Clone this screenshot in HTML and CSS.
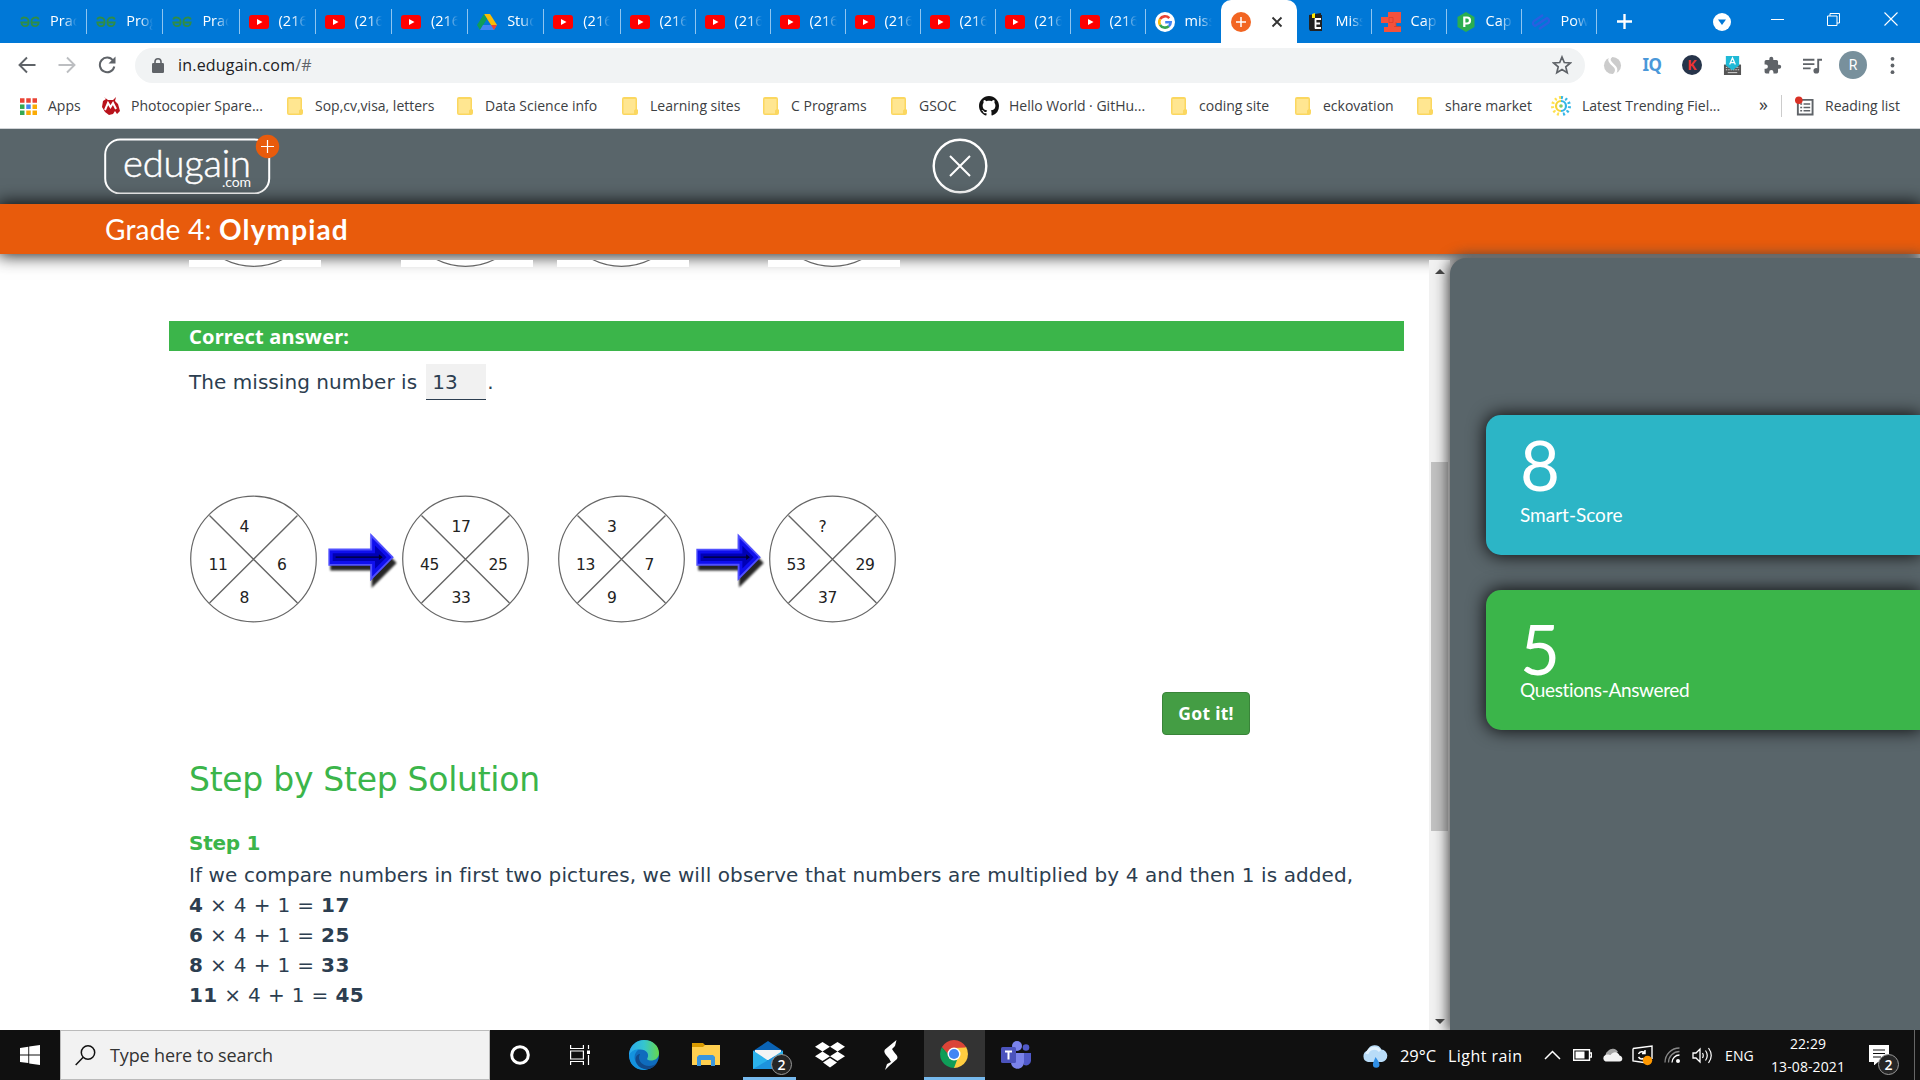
FILE: index.html
```html
<!DOCTYPE html>
<html lang="en">
<head>
<meta charset="utf-8">
<title>Edugain</title>
<link rel="stylesheet" href="styles.css">
</head>
<body>
<svg class="defs" width="0" height="0">
  <defs>
    <symbol id="gfg" viewBox="0 0 20 12"><g fill="none" stroke="#2f8d46" stroke-width="1.8"><path d="M1.3 3.5C2 .6 8.600 .6 8.600 6S2 11.600 1.300 6.500H9"/><path d="M18.700 3.500C18 .6 11.400 .6 11.400 6s6.600 5.600 7.300 .5H11"/></g></symbol>
    <symbol id="yt" viewBox="0 0 20 14"><rect width="20" height="14" rx="3" fill="#f00"/><path d="M8 4l5.500 3L8 10z" fill="#fff"/></symbol>
    <symbol id="folder" viewBox="0 0 16 18"><path d="M2 0h11a2 2 0 0 1 2 2v10l1 1v3a2 2 0 0 1-2 2H2a2 2 0 0 1-2-2V2a2 2 0 0 1 2-2z" fill="#fbd75f"/><path d="M1.500 2h12v10l-1.500 1.500V16.500H1.500z" fill="#ffe691"/></symbol>
    <symbol id="arrow" viewBox="0 0 79 60">
      <path d="M4 19H47V3L73 30 47 56V38H4z" fill="#000" opacity=".85" filter="url(#soft)" transform="translate(1.500 2)"/>
      <path d="M3.500 17H47V1L71.500 26 47 51V35H3.500z" fill="#5050ff"/>
      <path d="M5 19H49V6L69 26 49 46V33H5z" fill="#0f0fee"/>
      <path d="M8 22H52V14L64 26 52 38V30H8z" fill="#0000b4"/>
      <path d="M11 25.300H56V23L60 26 56 29V26.700H11z" fill="#000030"/>
    </symbol>
    <symbol id="disc" viewBox="0 0 132 132">
      <rect width="132" height="132" fill="#fff"/>
      <g fill="none" stroke="#666" stroke-width="1.200"><circle cx="64.500" cy="64" r="62.800"/><path d="M20.500 20.500l88 87.500M108.500 20.500l-88 87.500" stroke-width="1.400"/></g>
    </symbol>
    <filter id="soft" x="-20%" y="-20%" width="140%" height="140%"><feGaussianBlur stdDeviation="1.300"/></filter>
  </defs>
</svg>

<div class="screen">
  <div class="tabs">
    <div class="tab wide"><svg class="fav gfg"><use href="#gfg"/></svg><span>Prac</span></div>
    <div class="tab wide"><svg class="fav gfg"><use href="#gfg"/></svg><span>Prog</span></div>
    <div class="tab wide"><svg class="fav gfg"><use href="#gfg"/></svg><span>Prac</span></div>
    <div class="tab wide"><svg class="fav yt"><use href="#yt"/></svg><span>(216</span></div>
    <div class="tab wide"><svg class="fav yt"><use href="#yt"/></svg><span>(216</span></div>
    <div class="tab wide"><svg class="fav yt"><use href="#yt"/></svg><span>(216</span></div>
    <div class="tab wide"><svg class="fav" viewBox="0 0 20 18"><path d="M7 1h6l7 11h-6z" fill="#fbbc05"/><path d="M7 1l3 5-7 11-3-5z" fill="#0f9d58"/><path d="M6 12h14l-3 5H3z" fill="#4285f4"/><path d="M14 12h6l-3 5z" fill="#ea4335"/></svg><span>Stud</span></div>
    <div class="tab wide"><svg class="fav yt"><use href="#yt"/></svg><span>(216</span></div>
    <div class="tab"><svg class="fav yt"><use href="#yt"/></svg><span>(216</span></div>
    <div class="tab"><svg class="fav yt"><use href="#yt"/></svg><span>(216</span></div>
    <div class="tab"><svg class="fav yt"><use href="#yt"/></svg><span>(216</span></div>
    <div class="tab"><svg class="fav yt"><use href="#yt"/></svg><span>(216</span></div>
    <div class="tab"><svg class="fav yt"><use href="#yt"/></svg><span>(216</span></div>
    <div class="tab"><svg class="fav yt"><use href="#yt"/></svg><span>(216</span></div>
    <div class="tab"><svg class="fav yt"><use href="#yt"/></svg><span>(216</span></div>
    <div class="tab last"><svg class="fav" viewBox="0 0 20 20"><circle cx="10" cy="10" r="10" fill="#fff"/><g fill="none" stroke-width="2.600"><path d="M14.300 6.200A5.800 5.800 0 0 0 5 7.200" stroke="#ea4335"/><path d="M5 7.200a5.800 5.800 0 0 0 0 5.600" stroke="#fbbc05"/><path d="M5 12.800a5.800 5.800 0 0 0 8.800 1.400" stroke="#34a853"/><path d="M13.800 14.200A5.800 5.800 0 0 0 15.700 10.200H10.200" stroke="#4285f4"/></g></svg><span>miss</span></div>
    <div class="tab active"><svg class="fav" viewBox="0 0 20 20"><circle cx="10" cy="10" r="10" fill="#f26522"/><path d="M10 5v10M5 10h10" stroke="#fff" stroke-width="1.500"/></svg><svg class="shut" viewBox="0 0 12 12"><path d="M1.500 1.500l9 9M10.500 1.500l-9 9" stroke="#333" stroke-width="1.800"/></svg></div>
    <div class="tab"><svg class="fav" viewBox="0 0 20 20"><path d="M3 3l12-2v2h1v16H4L3 17z" fill="#222"/><path d="M6 2l3-1v5H6z" fill="#ffe600"/><path d="M9 7h6M9 11.500h5M9 16h6M9.500 6.500v10" stroke="#fff" stroke-width="1.800"/></svg><span>Miss</span></div>
    <div class="tab"><svg class="fav" viewBox="0 0 20 20"><path d="M7 0H20V11H15V15H20V20H3V15H7V11H0V5H7z" fill="#f4513b"/><path d="M8 5.500h4v5H8zM13 14.500h7M15 10v5" fill="none" stroke="#d8402c" stroke-width=".8"/></svg><span>Cap</span></div>
    <div class="tab"><svg class="fav" viewBox="0 0 20 20"><path d="M10 0l8.500 5v10L10 20l-8.500-5V5z" fill="#2bae4f"/><path d="M8.300 15V5.500H11a2.700 2.700 0 0 1 0 6H8.300" stroke="#fff" stroke-width="2.200" fill="none"/></svg><span>Cap</span></div>
    <div class="tab"><svg class="fav" viewBox="0 0 20 20"><g fill="none" stroke="#2a5fe0" stroke-width="2.200"><path d="M12 3L3 9c-2 2-1 4 1 5l9-6"/><path d="M8 17l9-6c2-2 1-4-1-5l-9 6"/></g></svg><span>Pow</span></div>
    <svg class="plus" viewBox="0 0 14 14"><path d="M7 0v14M0 7h14" stroke="#fff" stroke-width="2.200"/></svg>
    <div class="window-controls">
      <svg width="18" height="18" viewBox="0 0 18 18"><circle cx="9" cy="9" r="9" fill="#fff"/><path d="M5 6.500h8L9 12z" fill="#0078d7"/></svg>
      <svg width="13" height="13" viewBox="0 0 13 13"><path d="M0 6.500h13" stroke="#fff"/></svg>
      <svg width="13" height="13" viewBox="0 0 13 13"><path d="M.5 3h9.500v9.500H.5zM3 3V.5h9.500V10H10" stroke="#fff" fill="none"/></svg>
      <svg width="14" height="14" viewBox="0 0 14 14"><path d="M.5 .5l13 13M13.500 .5l-13 13" stroke="#fff" stroke-width="1.100"/></svg>
    </div>
  </div>

  <div class="toolbar">
    <svg class="back" viewBox="0 0 18 18"><path d="M17.500 9H1.500M9 1.500L1.500 9 9 16.500" fill="none" stroke="#5f6368" stroke-width="1.900"/></svg>
    <svg class="forward" viewBox="0 0 18 18"><path d="M.5 9h16M9 1.500L16.500 9 9 16.500" fill="none" stroke="#bcbec1" stroke-width="1.900"/></svg>
    <svg class="reload" viewBox="0 0 18 18"><path d="M15 4.500A7.300 7.300 0 1 0 16.300 10.500" fill="none" stroke="#5f6368" stroke-width="2"/><path d="M17.500 .5v7h-7z" fill="#5f6368"/></svg>
    <div class="omnibox">
      <svg class="lock" viewBox="0 0 12 15"><rect y="5" width="12" height="10" rx="1.200" fill="#5f6368"/><path d="M3 6V3.800a3 3 0 0 1 6 0V6" fill="none" stroke="#5f6368" stroke-width="1.600"/></svg>
      <span class="url">in.edugain.com<i>/#</i></span>
      <svg class="star" viewBox="0 0 20 20"><path d="M10 2l2.300 5.500 6 .5-4.500 3.900 1.400 5.800L10 14.600l-5.200 3.100 1.400-5.800L1.700 8l6-.5z" fill="none" stroke="#5f6368" stroke-width="1.700"/></svg>
    </div>
    <div class="extensions">
      <svg viewBox="0 0 20 20"><circle cx="10" cy="10" r="9" fill="#ccc"/><path d="M9 0C3 5 11 9 13 12s0 7-2 8" fill="none" stroke="#fff" stroke-width="2.500"/></svg>
      <b class="iq">IQ</b>
      <span class="kbadge">K</span>
      <svg viewBox="0 0 20 20"><path d="M1 9h18v11H1z" fill="#555"/><path d="M3 12h3M14 12h3M3 14.500h14" stroke="#ddd" stroke-dasharray="1.500 1"/><path d="M5 17.500h10" stroke="#ddd"/><path d="M3 0h14v10l-7 5-7-5z" fill="#1fb9d6"/><path d="M7 9l3-7 3 7M8 7h4" stroke="#fff" fill="none" stroke-width="1.300"/></svg>
      <svg viewBox="0 0 24 24"><path d="M20.500 11H19V7a2 2 0 0 0-2-2h-4V3.500a2.500 2.500 0 0 0-5 0V5H4a2 2 0 0 0-2 2v3.800h1.500a2.700 2.700 0 0 1 0 5.400H2V20a2 2 0 0 0 2 2h3.800v-1.500a2.700 2.700 0 0 1 5.400 0V22H17a2 2 0 0 0 2-2v-4h1.500a2.500 2.500 0 0 0 0-5z" fill="#5f6368"/></svg>
      <svg viewBox="0 0 20 20"><path d="M0 4h12M0 8.500h12M0 13h8" stroke="#5f6368" stroke-width="2"/><path d="M20 4h-4v11" stroke="#5f6368" stroke-width="2" fill="none"/><circle cx="14" cy="15.500" r="3" fill="#5f6368"/></svg>
      <span class="avatar">R</span>
      <svg viewBox="0 0 20 20"><g fill="#5f6368"><circle cx="10" cy="3" r="2"/><circle cx="10" cy="10" r="2"/><circle cx="10" cy="17" r="2"/></g></svg>
    </div>
  </div>

  <div class="bookmarks">
    <div><svg class="apps" viewBox="0 0 17 17"><path d="M0 2.500h17" stroke="#ea4335" stroke-width="4.500" stroke-dasharray="4.500 1.750"/><path d="M0 8.700h4.500" stroke="#34a853" stroke-width="4.500"/><path d="M6.250 8.700h4.500" stroke="#4285f4" stroke-width="4.500"/><path d="M12.500 8.700H17M12.500 14.800H17M6.250 14.800h4.500" stroke="#fbab05" stroke-width="4.500"/><path d="M0 14.800h4.500" stroke="#34a853" stroke-width="4.500"/></svg><span>Apps</span></div>
    <div><svg class="big" viewBox="0 0 20 20"><path d="M4 1l4 3h5l3-3-1 4 3 3 2 7-3 3-2-3-2 3-4 1-4-3-3-5 1-6 3-2z" fill="#b9121b"/><path d="M5 14L8 7l2.500 4L13 7l3 6" fill="none" stroke="#fff" stroke-width="2"/></svg><span>Photocopier Spare...</span></div>
    <div><svg><use href="#folder"/></svg><span>Sop,cv,visa, letters</span></div>
    <div><svg><use href="#folder"/></svg><span>Data Science info</span></div>
    <div><svg><use href="#folder"/></svg><span>Learning sites</span></div>
    <div><svg><use href="#folder"/></svg><span>C Programs</span></div>
    <div><svg><use href="#folder"/></svg><span>GSOC</span></div>
    <div><svg class="big" viewBox="0 0 16 16"><path fill="#111" d="M8 0C3.580 0 0 3.580 0 8c0 3.540 2.290 6.530 5.470 7.590.4.070.55-.17.55-.38 0-.19-.01-.82-.01-1.490-2.010.37-2.530-.49-2.690-.94-.09-.23-.48-.94-.82-1.130-.28-.15-.68-.52-.01-.53.63-.01 1.080.58 1.230.82.72 1.210 1.870.87 2.330.66.070-.52.28-.87.51-1.070-1.780-.2-3.640-.89-3.640-3.950 0-.87.31-1.590.82-2.150-.08-.2-.36-1.020.08-2.120 0 0 .67-.21 2.200.82.64-.18 1.320-.27 2-.27s1.360.09 2 .27c1.530-1.040 2.200-.82 2.200-.82.44 1.100.16 1.920.08 2.120.51.56.82 1.270.82 2.150 0 3.070-1.870 3.750-3.650 3.950.29.25.54.73.54 1.480 0 1.070-.01 1.930-.01 2.200 0 .21.15.46.55.38A8.010 8.010 0 0 0 16 8c0-4.420-3.580-8-8-8z"/></svg><span>Hello World · GitHu...</span></div>
    <div><svg><use href="#folder"/></svg><span>coding site</span></div>
    <div><svg><use href="#folder"/></svg><span>eckovation</span></div>
    <div><svg><use href="#folder"/></svg><span>share market</span></div>
    <div><svg class="big" viewBox="0 0 20 20"><path d="M10 1.500a8.500 8.500 0 0 0 0 17" fill="none" stroke="#ffe14d" stroke-width="3" stroke-dasharray="2 2.500"/><path d="M10 1.500a8.500 8.500 0 0 1 0 17" fill="none" stroke="#35b6e6" stroke-width="3" stroke-dasharray="2 2.500"/><path d="M10 5a5 5 0 0 0 0 10" fill="none" stroke="#f7d538" stroke-width="2.200"/><path d="M10 5a5 5 0 0 1 0 10" fill="none" stroke="#35b6e6" stroke-width="2.200"/><circle cx="10" cy="10" r="1.800" fill="#7fc96b"/></svg><span>Latest Trending Fiel...</span></div>
    <div class="more">»</div>
    <div class="reading"><svg viewBox="0 0 20 20"><path d="M3 3.500h15.500V19H3z" fill="none" stroke="#5f6368" stroke-width="2"/><path d="M5.500 8h2M9 8h7M5.500 11.500h2M9 11.500h7M5.500 15h2M9 15h7" stroke="#5f6368" stroke-width="1.600"/><circle cx="4" cy="4" r="4" fill="#d93025" /></svg><span>Reading list</span></div>
  </div>

  <header class="site-header">
    <svg class="logo" viewBox="0 0 176 60">
      <rect x="1.200" y="5.500" width="164" height="54" rx="15" fill="none" stroke="#fff" stroke-width="2"/>
      <text class="logo-name" x="19" y="42.500" textLength="128">edugain</text>
      <text class="logo-com" x="118" y="52.500" textLength="29">.com</text>
      <circle cx="163.500" cy="12.500" r="11.700" fill="#e85b0c"/>
      <path d="M163.500 6v13M157 12.500h13" stroke="#fff" stroke-width="1.200"/>
    </svg>
    <svg class="close" viewBox="0 0 56 56"><circle cx="28" cy="28" r="26.300" fill="none" stroke="#fff" stroke-width="2.400"/><path d="M18 18l20 20M38 18L18 38" stroke="#fff" stroke-width="2"/></svg>
  </header>
  <div class="grade"><span>Grade 4:</span><b>Olympiad</b></div>

  <div class="page">
    <main class="content">
      <div class="discs cut">
        <svg class="disc" viewBox="0 120.500 132 7"><use href="#disc" width="132" height="132"/></svg>
        <span class="space"></span>
        <svg class="disc" viewBox="0 120.500 132 7"><use href="#disc" width="132" height="132"/></svg>
        <svg class="disc third" viewBox="0 120.500 132 7"><use href="#disc" width="132" height="132"/></svg>
        <span class="space"></span>
        <svg class="disc" viewBox="0 120.500 132 7"><use href="#disc" width="132" height="132"/></svg>
      </div>
      <h3 class="answer-bar">Correct answer:</h3>
      <p class="answer"><span>The missing number is</span><span class="blank">13</span>.</p>
      <div class="discs">
        <svg class="disc" viewBox="0 0 132 132"><use href="#disc"/><text x="50.500" y="37">4</text><text x="19.500" y="74.500">11</text><text x="88" y="74.500">6</text><text x="50.500" y="108">8</text></svg>
        <svg class="arrow"><use href="#arrow"/></svg>
        <svg class="disc" viewBox="0 0 132 132"><use href="#disc"/><text x="50.500" y="37">17</text><text x="19" y="74.500">45</text><text x="87.500" y="74.500">25</text><text x="50.500" y="108">33</text></svg>
        <svg class="disc third" viewBox="0 0 132 132"><use href="#disc"/><text x="50" y="37">3</text><text x="19" y="74.500">13</text><text x="87.500" y="74.500">7</text><text x="50" y="108">9</text></svg>
        <svg class="arrow"><use href="#arrow"/></svg>
        <svg class="disc" viewBox="0 0 132 132"><use href="#disc"/><text x="50.500" y="37">?</text><text x="18.500" y="74.500">53</text><text x="87.500" y="74.500">29</text><text x="50" y="108">37</text></svg>
      </div>
      <button class="got">Got it!</button>
      <h2>Step by Step Solution</h2>
      <h4>Step 1</h4>
      <p class="step intro">If we compare numbers in first two pictures, we will observe that numbers are multiplied by 4 and then 1 is added,</p>
      <p class="step"><b>4</b> × 4 + 1 = <b>17</b></p>
      <p class="step"><b>6</b> × 4 + 1 = <b>25</b></p>
      <p class="step"><b>8</b> × 4 + 1 = <b>33</b></p>
      <p class="step"><b>11</b> × 4 + 1 = <b>45</b></p>
    </main>
    <div class="scrollbar"><i class="up"></i><i class="thumb"></i><i class="down"></i></div>
    <aside class="scores">
      <div class="card teal"><strong>8</strong><span>Smart-Score</span></div>
      <div class="card green"><strong>5</strong><span>Questions-Answered</span></div>
    </aside>
  </div>

  <footer class="taskbar">
    <div class="start"><svg width="20" height="20" viewBox="0 0 20 20"><path d="M0 3l8.300-1.200v7.700H0zM9.200 1.600L20 0v9.500H9.200zM0 10.400h8.300v7.700L0 17zM9.200 10.400H20V20l-10.800-1.600z" fill="#fff"/></svg></div>
    <div class="search"><svg width="21" height="21" viewBox="0 0 21 21"><circle cx="13" cy="7.500" r="6.700" fill="none" stroke="#111" stroke-width="1.500"/><path d="M8.200 12.300L.7 20" stroke="#111" stroke-width="1.500"/></svg><span>Type here to search</span></div>
    <div class="pins">
      <div><svg width="20" height="20" viewBox="0 0 20 20"><circle cx="10" cy="10" r="8.300" fill="none" stroke="#fff" stroke-width="3"/></svg></div>
      <div><svg width="20" height="20" viewBox="0 0 20 20"><path d="M.6 0v3.500h12.800V0M.6 20v-3.500h12.800V20M.6 6h12.800v8H.6zM18.500 0v4M18.500 10v10" fill="none" stroke="#fff" stroke-width="1.200"/><path d="M17 5.500h3v3.500h-3z" fill="#fff"/></svg></div>
      <div><svg width="30" height="30" viewBox="0 0 30 30"><defs><linearGradient id="ea" x1="0" x2="1"><stop offset="0" stop-color="#2aa9ee"/><stop offset=".5" stop-color="#35c5cf"/><stop offset="1" stop-color="#66d84b"/></linearGradient></defs><circle cx="15" cy="15" r="15" fill="#0f6cbd"/><path d="M0 14C1 5 8 0 15 0c9 0 15 6 15 13 0 5-4 7.500-8 7.500-3 0-4.500-1-3.500-2.500 2-4-1-8.500-7-8.500C6 9.500 2 12 0 17z" fill="url(#ea)"/><path d="M0 15c2-4 6-6 10-5.500-4 2-6 8-3 13 2.500 4 7 6.500 12 7C8 32 0 25 0 15z" fill="#1493df"/><path d="M11 14c-3 5 1 12 9 12 3 0 6-1 8-3-5 8-16 8-20 1-3-5-.5-10 3-10z" fill="#114a8b"/></svg></div>
      <div><svg width="28" height="24" viewBox="0 0 28 24"><path d="M0 0h11l2 2v4H0z" fill="#d99a00"/><path d="M0 4h11l2-2h15v20H0z" fill="#ffcf4f"/><path d="M5 23V14l2-2h14l2 2v9h-4v-6h-10v6z" fill="#3a96dd"/></svg></div>
      <div class="open"><svg width="30" height="28" viewBox="0 0 30 28"><path d="M0 10L15 0l15 10v6H0z" fill="#0a63b5"/><path d="M2 9h26v10H2z" fill="#f4f4f4"/><path d="M0 9.500l15 10 15-10V28H0z" fill="#2bb2ec"/><path d="M0 28l22-13 8 5v8z" fill="#1d93dd"/></svg><em class="badge">2</em></div>
      <div><svg width="30" height="26" viewBox="0 0 30 26"><path d="M7.500 0l7.500 4.800-7.500 4.700L0 4.800zM22.500 0L30 4.800l-7.500 4.700L15 4.800zM7.500 9.500l7.500 4.800L7.500 19 0 14.300zM22.500 9.500l7.500 4.800-7.500 4.700-7.500-4.700zM15 16l7 4.600-7 4.800-7-4.800z" fill="#fff"/></svg></div>
      <div><svg width="14" height="30" viewBox="0 0 14 30"><path d="M12.500 0L1 9.500c-2 3 1 5 4 9L7 22l6-3c1.500-3-1-4-3-7L8 9l3-3zM13 19L3 24 1 30l4-4z" fill="#fff"/></svg></div>
      <div class="current"><svg width="28" height="28" viewBox="0 0 28 28"><path d="M14 14L1.900 7A14 14 0 0 1 26.100 7z" fill="#db4437"/><path d="M14 14l12.100-7A14 14 0 0 1 14 28z" fill="#ffcd40"/><path d="M14 28A14 14 0 0 1 1.900 7L9 18l8 2z" fill="#0f9d58"/><path d="M14 7.500h12.300L20 15z" fill="#ffcd40"/><path d="M2 7l6 10 4-9.500z" fill="#0f9d58"/><path d="M2 7h24.200L14 8 8 14z" fill="#db4437"/><circle cx="14" cy="14" r="6.500" fill="#fff"/><circle cx="14" cy="14" r="5.100" fill="#4285f4"/></svg></div>
      <div><svg width="30" height="28" viewBox="0 0 30 28"><circle cx="16" cy="5" r="5" fill="#7b83eb"/><circle cx="25" cy="6.500" r="3.300" fill="#5059c9"/><path d="M20 12h10v8a5 5 0 0 1-7 4z" fill="#5059c9"/><path d="M10 12h13v9c0 9-13 9-13 0z" fill="#7b83eb"/><rect y="6" width="15" height="16" rx="1.500" fill="#4b53bc"/><path d="M4 10.500h7M7.500 10.500v8" stroke="#fff" stroke-width="2"/></svg></div>
    </div>
    <div class="weather"><svg width="26" height="24" viewBox="0 0 26 24"><path d="M6 18a6 6 0 0 1-.5-11.500A7.500 7.500 0 0 1 19.500 5.500 6.300 6.300 0 0 1 20 18z" fill="#b8dcf8"/><path d="M5 10a7.500 7.500 0 0 1 13-3" fill="none" stroke="#e2f2ff" stroke-width="3"/><path d="M13.500 13c3 4 4 6 4 7.500a3.300 3.300 0 0 1-6.600 0c0-1.500 1-3.500 2.600-7.500z" fill="#2f8fe6"/></svg><span class="temp">29°C</span><span class="rain">Light rain</span></div>
    <div class="tray">
      <svg width="17" height="10" viewBox="0 0 17 10"><path d="M1 9l7.500-7.500L16 9" fill="none" stroke="#fff" stroke-width="1.500"/></svg>
      <svg width="19" height="12" viewBox="0 0 19 12"><path d="M.7 .7h15.800v10.600H.7zM17 4h1.500v4H17" fill="none" stroke="#fff" stroke-width="1.400"/><path d="M2.500 2.500h9v7h-9z" fill="#fff"/></svg>
      <svg width="21" height="14" viewBox="0 0 21 14"><path d="M4 9a5 5 0 0 1 2-6 6 6 0 0 1 10 1l-9 6z" fill="#a5a5a5"/><path d="M3.500 13.500a3.500 3.500 0 0 1 0-6.500c2-1 4 0 5 0 3-4.500 8-3 9 .5 4 1 3.500 6 0 6z" fill="#f2f2f2"/></svg>
      <svg width="21" height="21" viewBox="0 0 21 21"><path d="M1 3.500L20 1v13M12 17.500L1 16V3.500" fill="none" stroke="#fff" stroke-width="1.400"/><path d="M13 8a4 4 0 0 0-6.500 1M6.500 12a4 4 0 0 0 5 1.500M13 5v3.500h-3" fill="none" stroke="#fff" stroke-width="1.500"/><circle cx="15.500" cy="15.500" r="4.700" fill="#ff9800"/></svg>
      <svg width="17" height="16" viewBox="0 0 17 16"><g fill="none" stroke="#888" stroke-width="1.300"><path d="M1 15.500A14.500 14.500 0 0 1 15.500 1M4.500 15.500a11 11 0 0 1 11-11"/><path d="M8 15.500A7.500 7.500 0 0 1 15.500 8" stroke="#fff"/></g><circle cx="14" cy="14" r="2" fill="#fff"/></svg>
      <svg width="21" height="17" viewBox="0 0 21 17"><path d="M1 6h3l4-4v13l-4-4H1z" fill="none" stroke="#fff" stroke-width="1.300"/><path d="M10.500 6q1.500 2.500 0 5M13.500 3.500q3.500 5 0 10M16.500 1q5.500 7.500 0 15" fill="none" stroke="#fff" stroke-width="1.200"/></svg>
      <span class="lang">ENG</span>
    </div>
    <div class="clock"><span>22:29</span><span>13-08-2021</span></div>
    <div class="notify"><svg width="20" height="20" viewBox="0 0 20 20"><path d="M0 0h20v17H9l-4 3.500V17H0z" fill="#fff"/><path d="M4 5h12M4 8.500h12M4 12h8" stroke="#101010" stroke-width="1.200"/></svg><em class="badge">2</em></div>
    <div class="peek"></div>
  </footer>
</div>
</body>
</html>
```
FILE: styles.css
```css
* { box-sizing: border-box; }
body { margin: 0; background: #fff; font-family: "Open Sans", "Noto Sans", sans-serif; }
svg { display: block; flex: none; }
h2, h3, h4, p { margin: 0; }
.defs { position: absolute; }
.screen { width: 1920px; height: 1080px; overflow: hidden; display: flex; flex-direction: column; }

/* tab strip */
.tabs { height: 43px; flex: none; background: #0078d7; display: flex; padding-left: 11px; }
.tab { width: 75px; flex: none; display: flex; align-items: center; padding-left: 9px; position: relative; color: #fff; font-size: 14.5px; }
.tab.wide { width: 76.200px; }
.tab::after { content: ""; position: absolute; right: 0; top: 9px; width: 1px; height: 25px; background: #8fc5f0; }
.tab span { width: 27px; margin-left: 10px; overflow: hidden; white-space: nowrap; line-height: 22px; margin-top: -2px; -webkit-mask-image: linear-gradient(90deg, #000 50%, transparent); mask-image: linear-gradient(90deg, #000 50%, transparent); }
.fav { width: 20px; height: 20px; }
.fav.gfg { height: 12px; }
.fav.yt { height: 14px; }
.tab.last::after, .tab.active::after { display: none; }
.tab.active { width: 76px; background: #fff; border-radius: 10px 10px 0 0; padding-left: 10px; justify-content: space-between; padding-right: 14px; }
.shut { width: 12px; height: 12px; }
.plus { width: 15px; height: 15px; margin: 14px 0 0 20px; }
.window-controls { margin-left: auto; display: flex; align-items: center; padding: 0 22px 5px 0; }
.window-controls svg:nth-child(1) { margin: 6px 40px 0 0; }
.window-controls svg:nth-child(2) { margin-right: 43px; }
.window-controls svg:nth-child(3) { margin-right: 44px; }

/* toolbar */
.toolbar { height: 44px; flex: none; display: flex; align-items: center; padding: 0 10px 0 18px; }
.back, .forward, .reload { width: 18px; height: 18px; flex: none; }
.forward { margin-left: 22px; }
.reload { margin-left: 22px; }
.omnibox { margin-left: 19px; width: 1450px; flex: none; height: 35px; background: #f1f3f4; border-radius: 18px; display: flex; align-items: center; padding: 0 13px 0 17px; }
.lock { width: 12px; height: 15px; }
.url { margin-left: 14px; font-size: 16px; letter-spacing: .2px; line-height: 30px; color: #202124; flex: 1; }
.url i { font-style: normal; color: #5f6368; }
.star { width: 20px; height: 20px; }
.extensions { flex: 1; display: grid; grid-template-columns: repeat(6, 40px) 42px 36px; margin-left: 7px; justify-items: center; align-items: center; }
.extensions svg { width: 19px; height: 19px; }
.iq { color: #4a98d9; font: bold 17px/24px "Noto Sans", sans-serif; letter-spacing: -.6px; }
.kbadge { width: 20px; height: 20px; border-radius: 50%; background: #26344a; color: #e33; font: bold 14px/20px "Open Sans", sans-serif; text-align: center; }
.avatar { width: 28px; height: 28px; border-radius: 50%; background: #78909c; color: #fff; font: 14px/28px Roboto, sans-serif; text-align: center; }

/* bookmarks */
.bookmarks { height: 42px; flex: none; border-bottom: 1px solid #d0d3d6; display: grid; padding-left: 20px; color: #3c4043; font-size: 14px; line-height: 34px;
  grid-template-columns: 80px 187px 170px 165px 141px 128px 88px 192px 124px 122px 134px 206px 24px 1fr; }
.bookmarks div { display: flex; align-items: center; white-space: nowrap; padding-bottom: 4px; }
.bookmarks svg { width: 16px; height: 18px; }
.bookmarks span { margin-left: 12px; }
.bookmarks .apps { width: 17px; height: 17px; }
.bookmarks .apps + span { margin-left: 11px; }
.bookmarks .big { width: 20px; height: 20px; }
.bookmarks .big + span { margin-left: 11px; }
.bookmarks div:nth-child(8) span { margin-left: 10px; }
.bookmarks .more { font-size: 18px; padding-bottom: 8px; padding-left: 2px; }
.bookmarks .reading { align-self: center; height: 22px; border-left: 1px solid #ccc; padding: 0 0 0 13px; margin: -5px 0 0 0; }
.bookmarks .reading svg { width: 19px; height: 20px; }
.bookmarks .reading span { margin-left: 11px; }

/* site header */
.site-header { height: 75px; flex: none; background: #59656a; display: flex; justify-content: space-between; padding: 5px 932px 0 104px; }
.logo { width: 176px; height: 60px; }
.logo-name { font: 300 38px Lato, sans-serif; fill: #fff; stroke: #fff; stroke-width: .5px; }
.logo-com { font: 14px Lato, sans-serif; fill: #fff; }
.close { width: 56px; height: 56px; margin-top: 4px; }
.grade { height: 50px; flex: none; background: #e85b0c; box-shadow: 0 0 16px 2px rgba(0, 0, 0, .85); position: relative; color: #fff; font: 28px/50px Lato, sans-serif; padding-left: 105px; display: flex; }
.grade span { width: 114px; letter-spacing: .2px; }
.grade b { letter-spacing: 1.150px; }

/* page body */
.page { height: 776px; flex: none; display: flex; position: relative; align-items: flex-start; }
.content { width: 1429px; height: 770px; margin-top: 6px; overflow: hidden; padding: 0 25px 0 169px; color: #2c3e50; font: 20px/30px "DejaVu Sans", sans-serif; display: flex; flex-direction: column; }
.discs { display: flex; padding-left: 20px; height: 132px; margin-top: 95px; flex: none; }
.discs.cut { height: 7px; margin-top: 0; }
.cut .disc { height: 7px; }
.disc { width: 132px; height: 132px; }
.disc text { font: 15.500px "DejaVu Sans", sans-serif; letter-spacing: -.4px; fill: #222; }
.third { margin-left: 24px; }
.arrow, .space { width: 80px; height: 60px; margin-top: 36px; flex: none; }
.arrow { padding-left: 4px; overflow: visible; }
.third + .arrow, .third + .space { width: 79px; }
.answer-bar { height: 30px; flex: none; margin-top: 54px; background: #3bb54a; color: #fff; font: bold 20px/31px "Noto Sans", sans-serif; letter-spacing: .17px; padding-left: 20px; }
.answer { height: 36px; flex: none; margin-top: 13px; padding-left: 20px; display: flex; line-height: 36px; letter-spacing: .05px; }
.blank { width: 60px; margin: 0 1px 0 9px; background: #f1f1f1; border-bottom: 1px solid #2c3e50; padding-left: 6px; }
.got { align-self: flex-start; width: 88px; height: 43px; flex: none; margin: 65px 0 0 993px; padding: 0; background: #449d44; border: 1px solid #398439; border-radius: 4px; color: #fff; font: bold 17.500px/39px "Noto Sans", sans-serif; letter-spacing: .3px; }
.content h2 { flex: none; margin: 25px 0 0 20px; font: 33px/40px "DejaVu Sans", sans-serif; letter-spacing: -.28px; color: #3bb54a; }
.content h4 { flex: none; margin: 28px 0 2px 20px; font: bold 20px/30px "DejaVu Sans", sans-serif; letter-spacing: -.25px; color: #3bb54a; }
.step { padding-left: 20px; flex: none; white-space: nowrap; letter-spacing: .36px; }
.step.intro { letter-spacing: .1px; }

.scrollbar { width: 21px; height: 770px; margin-top: 6px; background: #f1f1f1; display: flex; flex-direction: column; align-items: center; padding: 9px 2px 6px 2px; flex: none; }
.scrollbar i { display: block; }
.up { border: 5px solid transparent; border-top: 0; border-bottom: 5px solid #444; }
.down { border: 5px solid transparent; border-bottom: 0; border-top: 5px solid #444; margin-top: auto; }
.thumb { width: 17px; height: 369px; background: #c1c1c1; margin-top: 188px; }

.scores { flex: 1; height: 772px; margin-top: 4px; background: #59656a; border-radius: 16px 0 0 0; box-shadow: 0 0 14px 2px #444; display: flex; flex-direction: column; gap: 35px; padding: 157px 0 0 36px; }
.card { height: 140px; border-radius: 15px 0 0 15px; box-shadow: 0 0 17px 1px rgba(0, 0, 0, .85); color: #fff; padding: 15px 0 0 34px; font-family: Lato, sans-serif; display: flex; flex-direction: column; }
.card strong { font-weight: 400; font-size: 69px; line-height: 70px; height: 70px; }
.card span { font-size: 19px; line-height: 30px; }
.teal { background: #2cb5c6; }
.green { background: #3bb54a; padding-top: 24px; }
.green strong { height: 61px; }
.green span { letter-spacing: -.35px; }

/* taskbar */
.taskbar { height: 50px; flex: none; background: #101010; display: flex; color: #fff; position: relative; }
.start { width: 60px; display: grid; place-items: center; }
.search { width: 430px; background: #f2f2f2; border: 1px solid #bbb; display: flex; align-items: center; color: #333; font-size: 18px; letter-spacing: -.14px; padding-left: 14px; }
.search span { margin-left: 14px; }
.pins { display: grid; grid-template-columns: 60px 60px 68px 56px 68px 56px 66px 61px 61px; }
.pins div { display: grid; place-items: center; position: relative; }
.open { border-bottom: 3px solid #76b9ed; margin: 0 6px 0 9px; }
.open svg { margin: 3px 3px 0 0; }
.pins .badge { left: 28px; }
.current { background: #333; border-bottom: 3px solid #76b9ed; }
.current svg { margin-right: 1px; }
.badge { position: absolute; left: 30px; top: 24px; width: 21px; height: 21px; border: 1px solid #999; border-radius: 50%; background: #262626; font: 600 14px/19px "Open Sans", sans-serif; text-align: center; }
.weather { display: flex; align-items: center; margin-left: 316px; font-size: 16px; padding-top: 1px; }
.temp { margin-left: 12px; width: 48px; font-size: 16.500px; letter-spacing: -.1px; }
.rain { letter-spacing: .45px; }
.tray { display: grid; grid-template-columns: 29px 29px 30px 32px 28px 33px 30px; align-items: center; position: absolute; left: 1544px; top: 0; height: 50px; }
.lang { font-size: 14px; letter-spacing: .1px; }
.clock { position: absolute; left: 1768px; top: 2px; width: 80px; display: flex; flex-direction: column; align-items: center; font-size: 14px; line-height: 23px; letter-spacing: .1px; }
.notify { position: absolute; left: 1869px; top: 15px; }
.notify .badge { left: 9px; top: 9px; }
.peek { position: absolute; right: 5px; top: 0; width: 1px; height: 50px; background: #666; }
```
